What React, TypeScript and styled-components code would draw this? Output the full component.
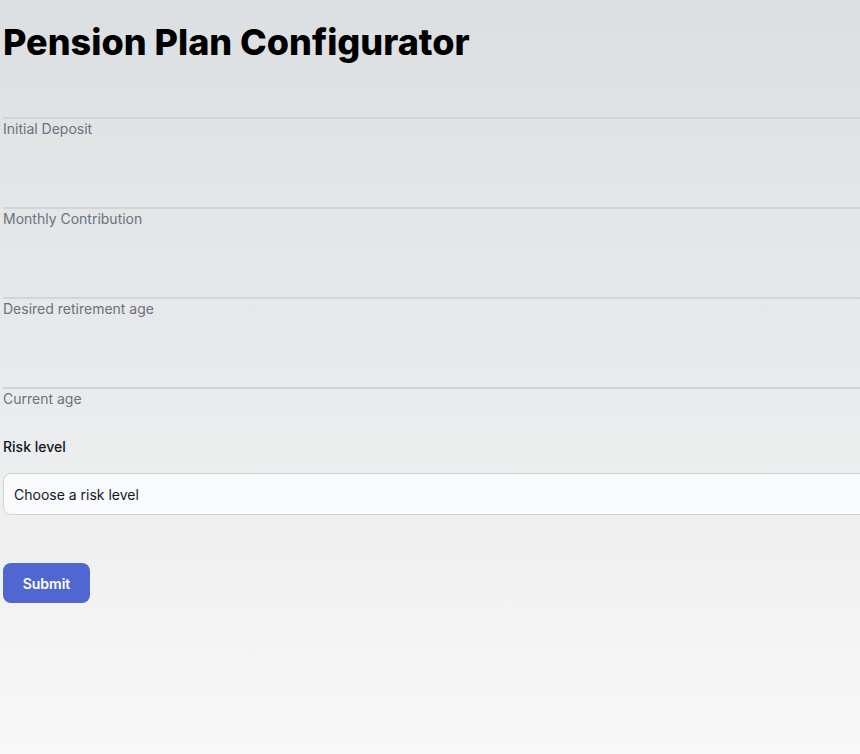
import React from "react";
import styled, { createGlobalStyle } from "styled-components";

const Global = createGlobalStyle`
  html, body { margin: 0; padding: 0; }
  body {
    font-family: Inter, "Noto Sans", sans-serif;
    overflow: hidden;
  }
  * { box-sizing: border-box; }
`;

const Page = styled.div`
  min-height: 754px;
  padding: 0 0 0 3px;
  background: linear-gradient(180deg, #dcdfe1 0%, #e9eaeb 50%, #f8f8f8 100%);
  overflow: hidden;
`;

const Title = styled.h1`
  margin: 22px 0 0;
  font-size: 36px;
  line-height: 40px;
  font-weight: 800;
  color: #000;
`;

const Form = styled.form`
  width: calc(100% + 40px);
  margin-top: 55px;
  display: flex;
  flex-direction: column;
`;

const Field = styled.div<{ $last?: boolean }>`
  border-top: 2px solid #d2d4d9;
  height: ${(p) => (p.$last ? "auto" : "90px")};
`;

const FieldLabel = styled.label`
  display: block;
  font-size: 14px;
  line-height: 20px;
  color: #6b7280;
`;

const RiskLabel = styled.label`
  display: block;
  margin-top: 28px;
  font-size: 14px;
  line-height: 20px;
  font-weight: 500;
  color: #111827;
`;

const Select = styled.select`
  margin-top: 16px;
  width: 100%;
  height: 42px;
  padding: 0 10px;
  border: 1px solid #d1d5db;
  border-radius: 8px;
  background: #f9fafb;
  font-family: Inter, "Noto Sans", sans-serif;
  font-size: 14px;
  color: #111827;
  appearance: none;
`;

const Submit = styled.button`
  margin-top: 48px;
  width: 87px;
  height: 40px;
  border: none;
  border-radius: 8px;
  background: #5066d1;
  color: #fff;
  font-family: Inter, "Noto Sans", sans-serif;
  font-size: 14px;
  font-weight: 600;
  cursor: pointer;
`;

const fields = [
  "Initial Deposit",
  "Monthly Contribution",
  "Desired retirement age",
  "Current age",
];

export default function App() {
  return (
    <>
      <Global />
      <Page>
        <Title>Pension Plan Configurator</Title>
        <Form onSubmit={(e) => e.preventDefault()}>
          {fields.map((f, i) => (
            <Field key={f} $last={i === fields.length - 1}>
              <FieldLabel>{f}</FieldLabel>
            </Field>
          ))}
          <RiskLabel>Risk level</RiskLabel>
          <Select defaultValue="">
            <option value="">Choose a risk level</option>
            <option value="low">Low</option>
            <option value="medium">Medium</option>
            <option value="high">High</option>
          </Select>
          <div>
            <Submit type="submit">Submit</Submit>
          </div>
        </Form>
      </Page>
    </>
  );
}
